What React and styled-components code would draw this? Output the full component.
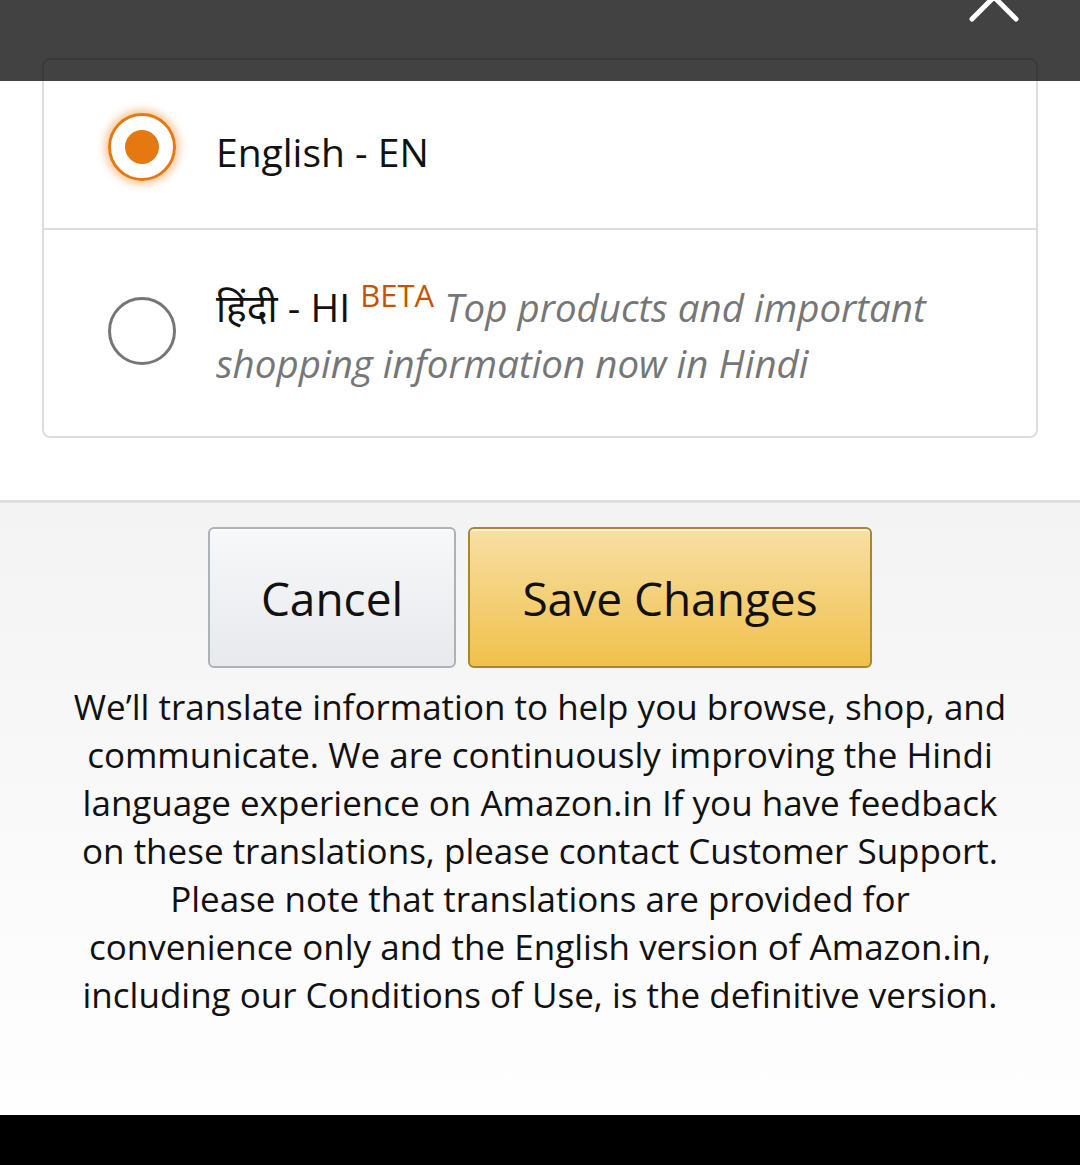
import styled, { createGlobalStyle } from "styled-components";

const GlobalStyle = createGlobalStyle`
    html, body {
        margin: 0;
        padding: 0;
        background: #fff;
    }
    body {
        font-family: "Open Sans", "Noto Sans", Arial, sans-serif;
        color: #111;
    }
`;

function Radio({ checked, offset }) {
    return (
        <RadioRing checked={checked} offset={offset}>
            {checked && <RadioDot />}
        </RadioRing>
    );
}

function App() {
    return (
        <Page>
            <GlobalStyle />
            <TopShade>
                <CloseIcon width="60" height="60" viewBox="0 0 60 60">
                    <path d="M8 8 L52 52 M52 8 L8 52" stroke="#fff" strokeWidth="5" strokeLinecap="round" />
                </CloseIcon>
            </TopShade>

            <ChoiceArea>
                <ChoiceCard>
                    <ChoiceRow height={168}>
                        <Radio checked offset={5} />
                        <LangLabel offset={15}>English - EN</LangLabel>
                    </ChoiceRow>
                    <ChoiceRow height={208} divider>
                        <Radio offset={-4} />
                        <LangText>
                            <LangLabel as="span">हिंदी - HI</LangLabel>{" "}
                            <Beta>BETA</Beta>{" "}
                            <Note>Top products and important shopping information now in Hindi</Note>
                        </LangText>
                    </ChoiceRow>
                </ChoiceCard>
            </ChoiceArea>

            <Footer>
                <ButtonRow>
                    <Button width={248}>Cancel</Button>
                    <Button width={404} primary>Save Changes</Button>
                </ButtonRow>
                <Disclaimer>
                    We’ll translate information to help you browse, shop, and<br />
                    communicate. We are continuously improving the Hindi<br />
                    language experience on Amazon.in If you have feedback<br />
                    on these translations, please contact Customer Support.<br />
                    Please note that translations are provided for<br />
                    convenience only and the English version of Amazon.in,<br />
                    including our Conditions of Use, is the definitive version.
                </Disclaimer>
            </Footer>
            <NavBar />
        </Page>
    );
}

const Page = styled.div`
    position: relative;
    width: 1080px;
    height: 1165px;
    overflow: hidden;
    display: flex;
    flex-direction: column;
`;

const TopShade = styled.div`
    position: absolute;
    top: 0;
    left: 0;
    right: 0;
    height: 81px;
    background: rgba(0, 0, 0, 0.74);
    z-index: 2;
`;

const CloseIcon = styled.svg`
    position: absolute;
    right: 56px;
    top: -33px;
`;

const ChoiceArea = styled.div`
    flex: none;
    background: #fff;
    padding: 58px 42px 62px;
`;

const ChoiceCard = styled.div`
    border: 2px solid #ddd;
    border-radius: 8px;
`;

const ChoiceRow = styled.div`
    height: ${(p) => p.height}px;
    box-sizing: border-box;
    display: flex;
    align-items: center;
    gap: 40px;
    padding: 0 30px 0 64px;
    border-top: ${(p) => (p.divider ? "2px solid #ddd" : "none")};
`;

const RadioRing = styled.div`
    flex: none;
    width: 68px;
    height: 68px;
    box-sizing: border-box;
    border-radius: 50%;
    border: 3px solid ${(p) => (p.checked ? "#e47911" : "#767676")};
    display: flex;
    align-items: center;
    justify-content: center;
    box-shadow: ${(p) => (p.checked ? "0 0 9px 3px rgba(228, 121, 17, 0.45)" : "none")};
    margin-top: ${(p) => p.offset || 0}px;
`;

const RadioDot = styled.div`
    width: 34px;
    height: 34px;
    border-radius: 50%;
    background: #e47911;
`;

const LangLabel = styled.div`
    font-size: 39px;
    line-height: 56px;
    color: #111;
    margin-top: ${(p) => p.offset || 0}px;
`;

const LangText = styled.div`
    font-size: 39px;
    line-height: 56px;
    margin-top: 4px;
`;

const Beta = styled.sup`
    font-size: 31px;
    color: #c45500;
    vertical-align: 15px;
    line-height: 0;
`;

const Note = styled.i`
    font-size: 38.5px;
    color: #767676;
`;

const Footer = styled.div`
    flex: none;
    height: 615px;
    box-sizing: border-box;
    border-top: 3px solid #ddd;
    background: linear-gradient(#f3f3f3, #fcfcfc 75%, #fefefe);
    padding: 24px 20px 0;
    display: flex;
    flex-direction: column;
    align-items: center;
`;

const ButtonRow = styled.div`
    display: flex;
    gap: 12px;
`;

const Button = styled.div`
    width: ${(p) => p.width}px;
    height: 141px;
    box-sizing: border-box;
    border-radius: 6px;
    border: 2px solid ${(p) => (p.primary ? "#a88734" : "#adb1b8")};
    background: ${(p) =>
        p.primary
            ? "linear-gradient(#f7dfa5, #f0c14b)"
            : "linear-gradient(#f7f8fa, #e7e9ec)"};
    display: flex;
    align-items: center;
    justify-content: center;
    font-size: 46px;
    color: #111;
    box-shadow: inset 0 2px 0 rgba(255, 255, 255, 0.6);
`;

const Disclaimer = styled.p`
    margin: 15px 0 0;
    text-align: center;
    font-size: 35px;
    line-height: 48px;
    color: #111;
    white-space: nowrap;
`;

const NavBar = styled.div`
    flex: 1;
    background: #000;
`;

export default App;
